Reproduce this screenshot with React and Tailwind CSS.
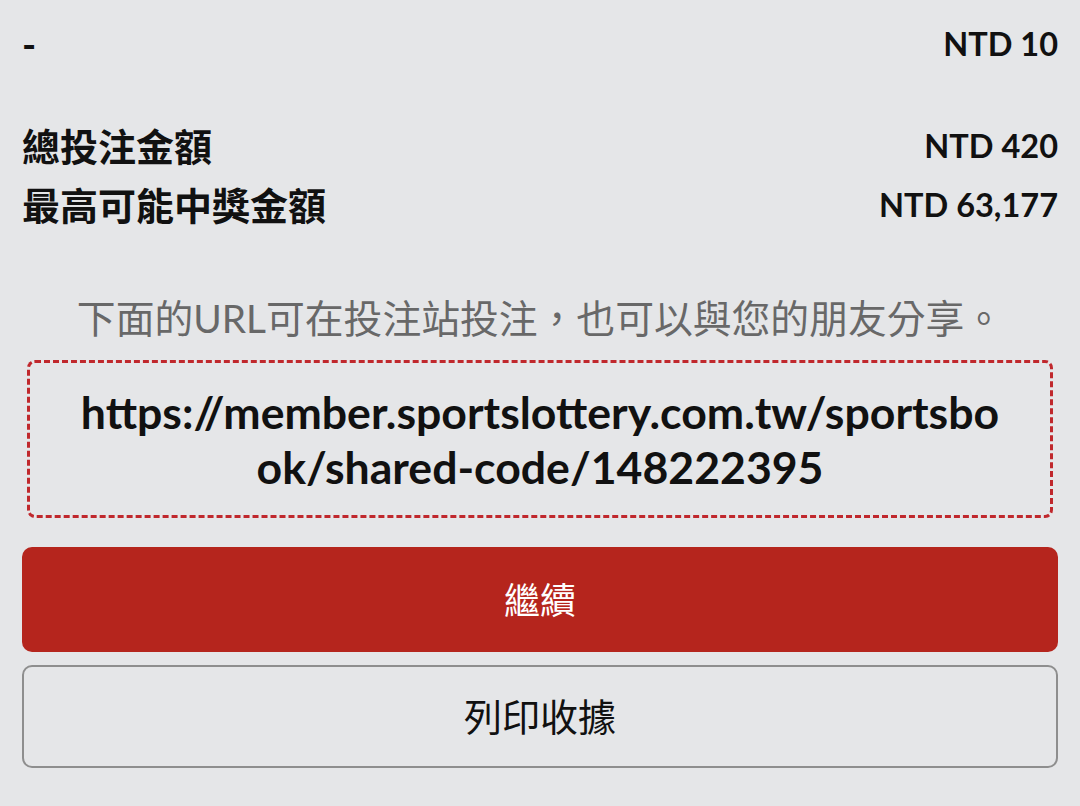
import React from 'react';

const font = "font-['Lato','Noto_Sans_CJK_TC',sans-serif]";

const Row = ({ label, amount, className = '' }) => (
    <div className={`flex items-center justify-between ${className}`}>
        <span className="text-[38px] font-bold text-[#111]">{label}</span>
        <span className="text-[32.5px] font-bold text-[#111]">{amount}</span>
    </div>
);

const App = () => {
    return (
        <div className={`min-h-screen bg-[#e5e6e8] px-[22px] pt-[15px] ${font}`}>
            <Row label="-" amount="NTD 10" className="h-[58px]" />
            <Row label="總投注金額" amount="NTD 420" className="mt-[44px] h-[59px]" />
            <Row label="最高可能中獎金額" amount="NTD 63,177" className="h-[59px]" />

            <p className="mt-[61px] flex h-[44px] items-center justify-center whitespace-nowrap text-[38.8px] leading-none text-[#686868]">
                下面的URL可在投注站投注，也可以與您的朋友分享。
            </p>

            <div className="mx-[5px] mt-[20px] flex h-[158px] items-center justify-center rounded-[8px] border-[3px] border-dashed border-[#c0282d] px-[48px]">
                <p className="break-all text-center text-[44.6px] font-bold leading-[55px] text-[#111]">
                    https://member.sportslottery.com.tw/sportsbook/shared&#8209;code/148222395
                </p>
            </div>

            <button className="mt-[29px] flex h-[105px] w-full items-center justify-center rounded-[10px] bg-[#b5251d] text-[36px] text-white">
                繼續
            </button>
            <button className="mt-[13px] flex h-[103px] w-full items-center justify-center rounded-[10px] border-2 border-[#8e8e8e] text-[38px] text-[#111]">
                列印收據
            </button>
        </div>
    );
};

export default App;
